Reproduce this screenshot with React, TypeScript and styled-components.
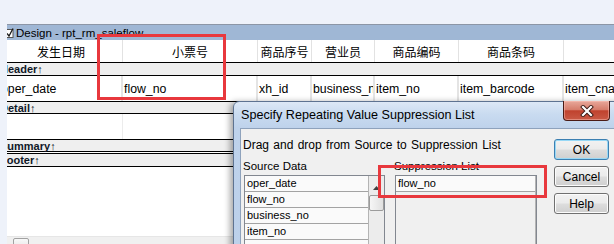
import React from 'react';
import styled, { createGlobalStyle } from 'styled-components';

const GlobalStyle = createGlobalStyle`
  html, body {
    margin: 0;
    padding: 0;
  }
  body {
    background: #eef2fa;
    font-family: "Liberation Sans", Arial, sans-serif;
    overflow: hidden;
  }
`;

const Desktop = styled.div`
  position: relative;
  width: 614px;
  height: 244px;
  overflow: hidden;
  padding: 24px 0 0 7px;
  box-sizing: border-box;
  display: flex;
`;

/* ---------- design window (datawindow painter) ---------- */

const DesignWindow = styled.div`
  flex: 1;
  min-width: 0;
  display: flex;
  flex-direction: column;
  border-top: 1px solid #8c96a6;
  background: #fff;
  overflow: hidden;
`;

const TitleBar = styled.div`
  flex: none;
  height: 15px;
  display: flex;
  align-items: center;
  gap: 2px;
  background: #9fb7d5;
  font-size: 11.5px;
  color: #000;
  white-space: nowrap;
`;

const Sheet = styled.div`
  flex: 1;
  min-height: 0;
  margin-left: -7px;
  display: flex;
  flex-direction: column;
`;

const Area = styled.div<{ $h: number }>`
  flex: none;
  height: ${p => p.$h}px;
  display: grid;
  grid-template-columns: 123px 135px 54px 63px 84px 105px 120px;
`;

const HeadCell = styled.div`
  display: flex;
  align-items: center;
  justify-content: center;
  border-right: 1px solid #e2e2e2;
  font-family: "Noto Sans CJK SC", sans-serif;
  font-size: 12px;
  color: #000;
  white-space: nowrap;
  overflow: hidden;
`;

const FieldCell = styled.div`
  display: flex;
  align-items: center;
  padding-left: 1px;
  border-right: 2px solid #e4e4e4;
  font-size: 12.3px;
  color: #000;
  white-space: nowrap;
  overflow: hidden;
`;

const BlankCell = styled.div`
  border-right: 1px solid #ececec;
`;

const Band = styled.div<{ $h: number }>`
  flex: none;
  height: ${p => p.$h}px;
  display: flex;
  align-items: center;
  border-top: 1px solid #000;
  border-bottom: 1px solid #000;
  background: #efefef;
  font-size: 11px;
  font-weight: bold;
  color: #101828;
  white-space: nowrap;
`;

const Empty = styled.div`
  flex: 1;
  background: #fff;
`;

const HScroll = styled.div`
  flex: none;
  height: 7px;
  background: #f0f0f0;
  border-top: 1px solid #e6e6e6;
  padding-left: 6px;
`;

const HThumb = styled.div`
  width: 14px;
  height: 12px;
  margin-top: 1px;
  border: 1px solid #a2a2a2;
  border-radius: 2px;
  background: linear-gradient(#f8f8f8, #e2e2e2);
`;

/* ---------- dialog ---------- */

const Dialog = styled.div`
  position: absolute;
  left: 233px;
  top: 101px;
  width: 381px;
  height: 170px;
  padding: 0 6px;
  display: flex;
  flex-direction: column;
  border: 1px solid #5e7391;
  border-radius: 6px 6px 0 0;
  background: linear-gradient(#dde8f6, #c9dbf0 12px, #bed2eb 26px, #bcd0ea);
  box-shadow: -3px 1px 6px rgba(0, 0, 0, 0.35);
`;

const DialogTitle = styled.div`
  flex: none;
  height: 26px;
  display: flex;
  align-items: center;
  padding-left: 1px;
  font-size: 12.6px;
  color: #000;
  white-space: nowrap;
`;

const CloseButton = styled.div`
  position: absolute;
  left: 329px;
  top: -1px;
  width: 45px;
  height: 19px;
  display: flex;
  align-items: center;
  justify-content: center;
  border: 1px solid #4a1b15;
  border-top: none;
  border-radius: 0 0 4px 4px;
  background: linear-gradient(#e8a89b, #d67d6c 45%, #c0422e 52%, #c95a46);
  box-shadow: inset 0 0 0 1px rgba(255, 200, 190, 0.45);
`;

const Client = styled.div`
  flex: 1;
  display: flex;
  padding: 0 8px 0 2px;
  border: 1px solid #8ea2bc;
  background: #f0f0f0;
`;

const Main = styled.div`
  width: 303px;
  display: flex;
  flex-direction: column;
`;

const Instruction = styled.div`
  margin-top: 9px;
  height: 14px;
  line-height: 14px;
  font-size: 12px;
  word-spacing: 1px;
  color: #000;
  white-space: nowrap;
`;

const Lists = styled.div`
  display: flex;
  gap: 9px;
`;

const Group = styled.div<{ $w: number }>`
  width: ${p => p.$w}px;
  display: flex;
  flex-direction: column;
`;

const Label = styled.div`
  margin-top: 7px;
  height: 14px;
  line-height: 14px;
  font-size: 11.5px;
  color: #000;
  white-space: nowrap;
`;

const ListBox = styled.div`
  margin: 2px 0 0 1px;
  height: 90px;
  display: flex;
  border: 1px solid #828790;
  background: #f0f0f0;
`;

const Rows = styled.div`
  flex: 1;
  border-right: 1px solid #b4b4b4;
`;

const Item = styled.div`
  height: 15px;
  line-height: 15px;
  padding-left: 2px;
  border-bottom: 1px solid #a3a3a3;
  background: #fafafa;
  font-size: 11px;
  color: #000;
  white-space: nowrap;
`;

const VScroll = styled.div`
  width: 15px;
  display: flex;
  flex-direction: column;
  align-items: center;
  background: #ececec;
`;

const ArrowUp = styled.div`
  height: 17px;
  width: 100%;
  display: flex;
  align-items: flex-end;
  justify-content: center;
  padding-bottom: 3px;
  box-sizing: border-box;
`;

const VThumb = styled.div`
  width: 13px;
  height: 14px;
  margin-top: 2px;
  border: 1px solid #9b9b9b;
  border-radius: 2px;
  background: linear-gradient(90deg, #f6f6f6, #e0e0e0);
`;

const Buttons = styled.div`
  margin-left: 8px;
  padding-top: 10px;
  display: flex;
  flex-direction: column;
  gap: 6px;
`;

const Button = styled.div<{ $default?: boolean }>`
  width: 53px;
  height: 19px;
  display: flex;
  align-items: center;
  justify-content: center;
  border: 1px solid ${p => (p.$default ? '#3c7fb1' : '#707070')};
  border-radius: 3px;
  background: linear-gradient(#f2f2f2, #ebebeb 48%, #dddddd 52%, #cfcfcf);
  box-shadow: inset 0 0 0 1px ${p => (p.$default ? '#97d8f6' : '#fcfcfc')};
  font-size: 12px;
  color: #000;
`;

/* ---------- annotation marks ---------- */

const Mark = styled.div<{ $x: number; $y: number; $w: number; $h: number }>`
  position: absolute;
  left: ${p => p.$x}px;
  top: ${p => p.$y}px;
  width: ${p => p.$w}px;
  height: ${p => p.$h}px;
  border: 3px solid #e8383d;
  box-sizing: border-box;
`;

const headers = ['发生日期', '小票号', '商品序号', '营业员', '商品编码', '商品条码', ''];
const fields = ['oper_date', 'flow_no', 'xh_id', 'business_no', 'item_no', 'item_barcode', 'item_cname'];
const sourceItems = ['oper_date', 'flow_no', 'business_no', 'item_no', ''];

const WindowIcon = () => (
  <svg width="7" height="10" viewBox="0 0 7 10">
    <rect x="-2" y="1.5" width="8" height="8" fill="#fff" stroke="#555" />
    <path d="M0 5.5 L2 8 L6 0.5" fill="none" stroke="#1b1b1b" strokeWidth="1.3" />
  </svg>
);

const CloseGlyph = () => (
  <svg width="14" height="12" viewBox="0 0 14 12">
    <path d="M3 2 L11 10 M11 2 L3 10" stroke="#3a1a15" strokeWidth="4" strokeLinecap="square" />
    <path d="M3 2 L11 10 M11 2 L3 10" stroke="#fff" strokeWidth="2.2" strokeLinecap="square" />
  </svg>
);

const UpGlyph = () => (
  <svg width="7" height="4" viewBox="0 0 7 4">
    <path d="M0 4 L3.5 0 L7 4 Z" fill="#404040" />
  </svg>
);

const App = () => {
  return (
    <Desktop>
      <GlobalStyle />
      <DesignWindow>
        <TitleBar>
          <WindowIcon />
          <span>Design - rpt_rm_saleflow</span>
        </TitleBar>
        <Sheet>
          <Area $h={22}>
            {headers.map((h, i) => (
              <HeadCell key={i}>{h}</HeadCell>
            ))}
          </Area>
          <Band $h={12}>Header↑</Band>
          <Area $h={25}>
            {fields.map(f => (
              <FieldCell key={f}>{f}</FieldCell>
            ))}
          </Area>
          <Band $h={11}>Detail↑</Band>
          <Area $h={25}>
            {fields.map(f => (
              <BlankCell key={f} />
            ))}
          </Area>
          <Band $h={11}>Summary↑</Band>
          <Area $h={1} />
          <Band $h={12}>Footer↑</Band>
          <Empty />
        </Sheet>
        <HScroll>
          <HThumb />
        </HScroll>
      </DesignWindow>

      <Dialog>
        <DialogTitle>Specify Repeating Value Suppression List</DialogTitle>
        <CloseButton>
          <CloseGlyph />
        </CloseButton>
        <Client>
          <Main>
            <Instruction>Drag and drop from Source to Suppression List</Instruction>
            <Lists>
              <Group $w={142}>
                <Label>Source Data</Label>
                <ListBox>
                  <Rows>
                    {sourceItems.map((s, i) => (
                      <Item key={i}>{s}</Item>
                    ))}
                  </Rows>
                  <VScroll>
                    <ArrowUp>
                      <UpGlyph />
                    </ArrowUp>
                    <VThumb />
                  </VScroll>
                </ListBox>
              </Group>
              <Group $w={143}>
                <Label>Suppression List</Label>
                <ListBox>
                  <Rows>
                    <Item>flow_no</Item>
                  </Rows>
                </ListBox>
              </Group>
            </Lists>
          </Main>
          <Buttons>
            <Button $default>OK</Button>
            <Button>Cancel</Button>
            <Button>Help</Button>
          </Buttons>
        </Client>
      </Dialog>

      <Mark $x={97} $y={34} $w={129} $h={66} />
      <Mark $x={378} $y={165} $w={169} $h={33} />
    </Desktop>
  );
};

export default App;
